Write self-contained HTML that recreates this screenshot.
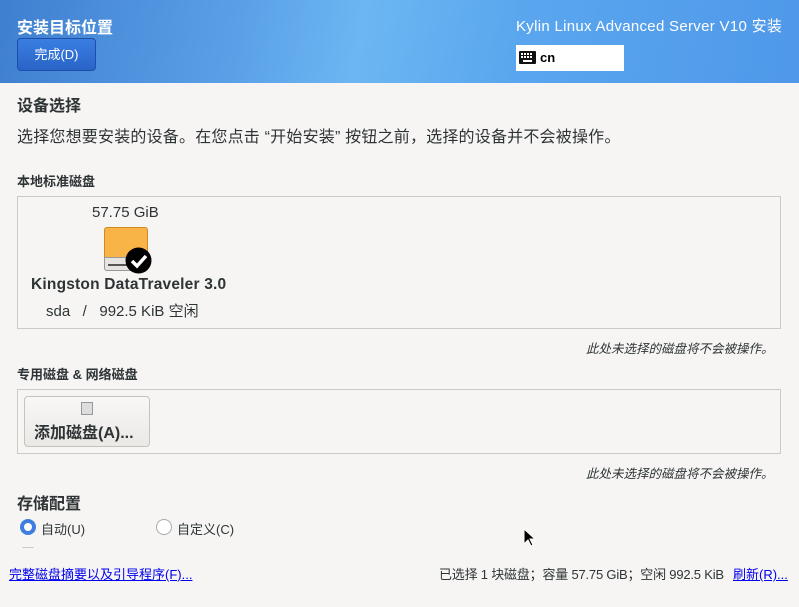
<!DOCTYPE html>
<html><head><meta charset="utf-8"><style>
*{margin:0;padding:0;box-sizing:border-box}
body{width:799px;height:607px;overflow:hidden;background:#f6f5f3;font-family:"Liberation Sans","Noto Sans CJK SC",sans-serif;color:#2e3436;position:relative}
.hdr{position:absolute;left:0;top:0;width:799px;height:83px;background:linear-gradient(100deg,#3f7fcf 0%,#5aa0e8 30%,#6cb6f2 45%,#5aa6ee 65%,#4f98ea 100%)}
.a{position:absolute;white-space:nowrap}
.box{position:absolute;border:1px solid #cdc9c3;background:#f6f5f3}
</style></head><body>
<div class="hdr"></div>
<div class="a" style="left:17px;top:14px;font-size:16px;font-weight:bold;color:#fff">安装目标位置</div>
<div class="a" style="left:17px;top:38px;width:79px;height:33px;border-radius:4px;background:linear-gradient(#3a7ee2,#2a64c8);border:1px solid #1d4fa8;color:#fff;font-size:13px;text-align:center;line-height:31px">完成(D)</div>
<div class="a" style="left:516px;top:15px;font-size:15px;letter-spacing:0.3px;color:#fff">Kylin Linux Advanced Server V10 安装</div>
<div class="a" style="left:516px;top:45px;width:108px;height:26px;background:#fff"></div>
<svg class="a" style="left:519px;top:51px" width="17" height="13"><rect x="0" y="0" width="17" height="13" rx="1" fill="#111"/><g fill="#fff"><rect x="2" y="2" width="2" height="2"/><rect x="5" y="2" width="2" height="2"/><rect x="8" y="2" width="2" height="2"/><rect x="11" y="2" width="2" height="2"/><rect x="2" y="5" width="2" height="2"/><rect x="5" y="5" width="2" height="2"/><rect x="8" y="5" width="2" height="2"/><rect x="11" y="5" width="2" height="2"/><rect x="4" y="9" width="9" height="2"/></g></svg>
<div class="a" style="left:540px;top:50px;font-size:13px;font-weight:bold;color:#000">cn</div>
<div class="a" style="left:17px;top:92px;font-size:16px;font-weight:bold">设备选择</div>
<div class="a" style="left:17px;top:123px;font-size:16px;letter-spacing:0.2px">选择您想要安装的设备。在您点击 “开始安装” 按钮之前，选择的设备并不会被操作。</div>
<div class="a" style="left:17px;top:171px;font-size:13px;font-weight:bold">本地标准磁盘</div>
<div class="box" style="left:17px;top:196px;width:764px;height:133px"></div>
<div class="a" style="left:92px;top:204px;font-size:15px">57.75 GiB</div>
<div class="a" style="left:104px;top:227px;width:44px;height:44px;border-radius:3px;background:#f9b448;border:1px solid #d08a20"></div>
<div class="a" style="left:104px;top:257px;width:44px;height:14px;background:#e6e4e0;border-radius:0 0 3px 3px;border:1px solid #999"></div>
<div class="a" style="left:108px;top:264px;width:24px;height:2px;background:#555"></div>
<svg class="a" style="left:125px;top:247px" width="27" height="27"><circle cx="13.5" cy="13.5" r="13" fill="#000"/><path d="M7 14l5 5 9-10" stroke="#fff" stroke-width="3.5" fill="none"/></svg>
<div class="a" style="left:31px;top:276px;font-size:15.5px;font-weight:bold;letter-spacing:0.2px">Kingston DataTraveler 3.0</div>
<div class="a" style="left:46px;top:300px;font-size:15px">sda&nbsp;&nbsp;&nbsp;/&nbsp;&nbsp;&nbsp;992.5 KiB 空闲</div>
<div class="a" style="left:586px;top:338px;font-size:12.5px;font-style:italic">此处未选择的磁盘将不会被操作。</div>
<div class="a" style="left:17px;top:364px;font-size:13px;font-weight:bold">专用磁盘 &amp; 网络磁盘</div>
<div class="box" style="left:17px;top:389px;width:764px;height:65px"></div>
<div class="a" style="left:24px;top:396px;width:126px;height:51px;border:1px solid #c6c2bc;border-radius:4px;background:linear-gradient(#f8f7f6,#ebe9e6)"></div>
<div class="a" style="left:81px;top:402px;width:12px;height:13px;border:1px solid #999;background:#ddd"></div>
<div class="a" style="left:34px;top:419px;font-size:16px;font-weight:bold">添加磁盘(A)...</div>
<div class="a" style="left:586px;top:463px;font-size:12.5px;font-style:italic">此处未选择的磁盘将不会被操作。</div>
<div class="a" style="left:17px;top:490px;font-size:16px;font-weight:bold">存储配置</div>
<div class="a" style="left:20px;top:519px;width:16px;height:16px;border-radius:50%;background:#3d7ee0"><div style="margin:4px;width:8px;height:8px;border-radius:50%;background:#fff"></div></div>
<div class="a" style="left:41px;top:519px;font-size:13px">自动(U)</div>
<div class="a" style="left:156px;top:519px;width:16px;height:16px;border-radius:50%;border:1px solid #aaa;background:#fff"></div>
<div class="a" style="left:177px;top:519px;font-size:13px">自定义(C)</div>
<div class="a" style="left:22px;top:547px;width:12px;height:1px;background:#ccc"></div>
<svg class="a" style="left:523px;top:528px" width="12" height="20"><path d="M1 1v15l4-4 3 6 2-1-3-6h5z" fill="#000" stroke="#fff" stroke-width="1"/></svg>
<div class="a" style="left:9px;top:564px;font-size:13px;color:#00e;text-decoration:underline">完整磁盘摘要以及引导程序(F)...</div>
<div class="a" style="left:439px;top:564px;font-size:13px;letter-spacing:-0.2px">已选择 1 块磁盘；容量 57.75 GiB；空闲 992.5 KiB</div>
<div class="a" style="left:733px;top:564px;font-size:13px;color:#00e;text-decoration:underline">刷新(R)...</div>
</body></html>
